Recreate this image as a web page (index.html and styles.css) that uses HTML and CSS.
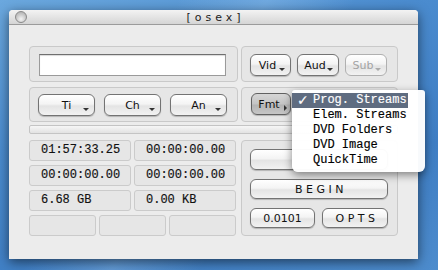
FILE: index.html
```html
<!DOCTYPE html>
<html lang="en">
<head>
    <meta charset="UTF-8">
    <title>osex</title>
    <link rel="stylesheet" href="styles.css">
</head>
    <body>
        <div class="desktop">
            <div class="window">
                <div class="titlebar">
                    <span class="close"></span>
                    <span class="title">[osex]</span>
                    <span></span>
                </div>
                <div class="content">
                    <div class="top">
                        <div class="box name-box">
                            <div class="field"></div>
                        </div>
                        <div class="box track-box">
                            <button class="btn pop w-vid">Vid</button>
                            <button class="btn pop w-aud">Aud</button>
                            <button class="btn pop w-sub" disabled>Sub</button>
                        </div>
                        <div class="box chap-box">
                            <button class="btn pop w-ch">Ti</button>
                            <button class="btn pop w-ch">Ch</button>
                            <button class="btn pop w-ch">An</button>
                        </div>
                        <div class="box fmt-box">
                            <button class="btn fmt">Fmt</button>
                        </div>
                    </div>
                    <div class="progress"></div>
                    <div class="bottom">
                        <div class="cells">
                            <div class="cell-row two">
                                <div class="cell">01:57:33.25</div>
                                <div class="cell">00:00:00.00</div>
                            </div>
                            <div class="cell-row two">
                                <div class="cell">00:00:00.00</div>
                                <div class="cell">00:00:00.00</div>
                            </div>
                            <div class="cell-row two">
                                <div class="cell">6.68 GB</div>
                                <div class="cell">0.00 KB</div>
                            </div>
                            <div class="cell-row three">
                                <div class="cell"></div>
                                <div class="cell"></div>
                                <div class="cell"></div>
                            </div>
                        </div>
                        <div class="box action-box">
                            <button class="btn wide blank"></button>
                            <button class="btn wide spaced">BEGIN</button>
                            <div class="action-row">
                                <button class="btn">0.0101</button>
                                <button class="btn spaced">OPTS</button>
                            </div>
                        </div>
                    </div>
                </div>
                <ul class="menu">
                    <li class="active"><span class="check">&#10003;</span>Prog. Streams</li>
                    <li>Elem. Streams</li>
                    <li>DVD Folders</li>
                    <li>DVD Image</li>
                    <li>QuickTime</li>
                </ul>
            </div>
        </div>
    </body>
</html>
```

FILE: styles.css
```css
body
{
    margin: 0;
    font-family: "Liberation Sans", Arial, sans-serif;
    overflow: hidden;
}
.desktop
{
    width: 438px;
    height: 270px;
    overflow: hidden;
    padding: 10px 0 0 9px;
    box-sizing: border-box;
    background:
        linear-gradient(120deg, rgba(255,255,255,0) 30%, rgba(160,205,245,0.35) 45%, rgba(255,255,255,0) 60%),
        linear-gradient(160deg, #6ba8de 0%, #4b8ccf 35%, #3e7dc3 70%, #4d8ccd 100%);
}
.window
{
    position: relative;
    width: 409px;
    height: 249px;
    background: #ececec;
    border-radius: 4px 4px 0 0;
    box-shadow: 0 3px 12px rgba(0, 0, 0, 0.55);
}
.titlebar
{
    height: 14px;
    border-bottom: 1px solid #9b9b9b;
    border-radius: 4px 4px 0 0;
    background: linear-gradient(#f3f3f3, #d5d5d5);
    display: grid;
    grid-template-columns: 1fr auto 1fr;
    align-items: center;
}
.close
{
    width: 10px;
    height: 10px;
    margin-left: 6px;
    border-radius: 50%;
    border: 1px solid #8a8a8a;
    background: radial-gradient(circle at 50% 70%, #f4f4f4, #c4c4c4 60%, #a8a8a8);
}
.title
{
    font-family: "DejaVu Sans", sans-serif;
    font-size: 11px;
    letter-spacing: 4px;
    color: #222;
    padding-left: 4px;
}
.content
{
    padding: 21px 20px 0 20px;
}
.top
{
    display: grid;
    grid-template-columns: 209px 157px;
    grid-template-rows: 36px 35px;
    column-gap: 3px;
    row-gap: 5px;
}
.box
{
    box-sizing: border-box;
    background: #e6e6e6;
    border: 1px solid #c9c9c9;
    border-radius: 4px;
    display: flex;
    align-items: flex-start;
}
.name-box
{
    padding: 7px 0 0 9px;
}
.field
{
    width: 187px;
    height: 22px;
    box-sizing: border-box;
    background: #fff;
    border: 1px solid #9a9a9a;
    border-top-color: #6f6f6f;
    box-shadow: inset 0 1px 1px rgba(0, 0, 0, 0.15);
}
.track-box
{
    padding: 7px 0 0 8px;
    gap: 6px;
}
.chap-box
{
    padding: 6px 0 0 8px;
    gap: 9px;
}
.fmt-box
{
    padding: 5px 0 0 9px;
}
.btn
{
    position: relative;
    box-sizing: border-box;
    height: 22px;
    padding: 0;
    font-family: "DejaVu Sans", sans-serif;
    font-size: 11px;
    color: #111;
    background: linear-gradient(#ffffff, #f4f4f4 45%, #e4e4e4 55%, #f2f2f2);
    border: 1px solid #737373;
    border-radius: 6px;
    box-shadow: 0 1px 1px rgba(0, 0, 0, 0.22);
}
.w-vid
{
    width: 41px;
    padding-right: 6px;
}
.w-aud
{
    width: 42px;
    padding-right: 6px;
}
.w-sub
{
    width: 42px;
    padding-right: 6px;
}
.w-ch
{
    width: 57px;
}
.pop::after
{
    content: "";
    position: absolute;
    right: 5px;
    bottom: 4px;
    border-left: 3px solid transparent;
    border-right: 3px solid transparent;
    border-top: 3px solid #333;
}
.btn:disabled
{
    color: #a3a3a3;
    border-color: #b0b0b0;
    box-shadow: none;
}
.btn:disabled::after
{
    border-top-color: #aaa;
}
.fmt
{
    width: 40px;
    padding-right: 4px;
    background: linear-gradient(#d6d6d6, #c4c4c4 50%, #b4b4b4 55%, #c6c6c6);
    border-color: #616161;
}
.fmt::after
{
    content: "";
    position: absolute;
    right: 3px;
    bottom: 3px;
    border-top: 3px solid transparent;
    border-bottom: 3px solid transparent;
    border-left: 3px solid #333;
}
.progress
{
    margin-top: 3px;
    height: 9px;
    box-sizing: border-box;
    border: 1px solid #c4c4c4;
    border-radius: 2px;
    background: linear-gradient(#f6f6f6, #e2e2e2);
}
.bottom
{
    margin-top: 6px;
    display: grid;
    grid-template-columns: 207px 157px;
    column-gap: 5px;
    height: 96px;
}
.cells
{
    display: flex;
    flex-direction: column;
    gap: 4px;
}
.cell-row
{
    display: grid;
    gap: 3px;
    height: 21px;
}
.two
{
    grid-template-columns: 102px 102px;
}
.three
{
    grid-template-columns: 67px 67px 67px;
}
.cell
{
    box-sizing: border-box;
    background: #e6e6e6;
    border: 1px solid #cbcbcb;
    border-radius: 3px;
    padding-left: 11px;
    font-family: "Liberation Mono", "Courier New", monospace;
    font-size: 12px;
    line-height: 19px;
    color: #111;
    -webkit-text-stroke: 0.15px #111;
}
.action-box
{
    flex-direction: column;
    padding: 8px 0 0 8px;
    gap: 9px;
}
.wide
{
    width: 138px;
    height: 20px;
}
.blank
{
    height: 21px;
}
.spaced
{
    letter-spacing: 3.5px;
    padding-left: 4px;
}
.action-row
{
    display: flex;
    gap: 7px;
}
.action-row .btn
{
    height: 20px;
    width: 65px;
}
.action-row .spaced
{
    width: 66px;
}
.menu
{
    position: absolute;
    left: 283px;
    top: 80px;
    width: 133px;
    margin: 0;
    padding: 3px 0 4px 0;
    list-style: none;
    background: rgba(255, 255, 255, 0.97);
    border-radius: 3px 3px 6px 6px;
    box-shadow: 0 3px 9px rgba(0, 0, 0, 0.45);
    font-family: "Liberation Mono", "Courier New", monospace;
    font-size: 12px;
    color: #000;
    -webkit-text-stroke: 0.15px currentColor;
}
.menu li
{
    height: 15px;
    line-height: 15px;
    padding-left: 21px;
    position: relative;
}
.menu li.active
{
    width: 95px;
    background: #5f6c80;
    color: #fff;
}
.check
{
    position: absolute;
    left: 5px;
    font-family: "DejaVu Sans", sans-serif;
    font-size: 14px;
    font-weight: bold;
}
```
